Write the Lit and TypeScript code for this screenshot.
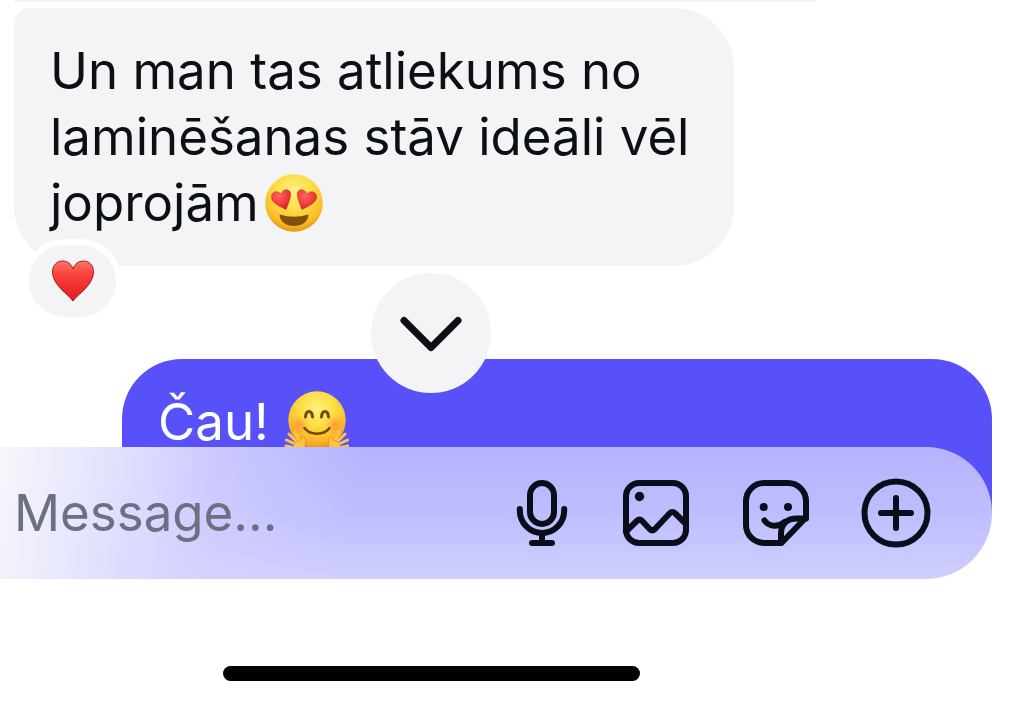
import { LitElement, css, html, svg } from "lit";
import { customElement, property } from "lit/decorators.js";

const micIcon = svg`<svg class="stroke" width="60" height="72" viewBox="0 0 60 72" aria-hidden="true">
  <rect x="18" y="6" width="24" height="41" rx="12"/>
  <path d="M7.800 32v1.500a22.200 22.600 0 0 0 44.400 0V32M30 56v10M20 66h20"/>
</svg>`;

const photoIcon = svg`<svg class="stroke" width="72" height="72" viewBox="0 0 72 72" aria-hidden="true">
  <rect x="6" y="6" width="60" height="60" rx="13"/>
  <circle class="dot" cx="19.500" cy="19.500" r="4.700"/>
  <path d="M6 54.500 16.800 44q2.700-2.500 5.400 0l7.400 8q2.700 2.500 5.400 0l14.500-15.500q2.900-3 5.800 0L66 47"/>
</svg>`;

const stickerIcon = svg`<svg class="stroke" width="72" height="72" viewBox="0 0 72 72" aria-hidden="true">
  <path d="M41.500 66H24A18 18 0 0 1 6 48V24A18 18 0 0 1 24 6h24a18 18 0 0 1 18 18v16.500z"/>
  <path d="M66 41.500H57C46 41.500 41 48 41 57v8"/>
  <path d="M24.500 43.500c5 6.500 13 7 20 1.500"/>
  <circle class="dot" cx="23.700" cy="30" r="4"/>
  <circle class="dot" cx="48" cy="30" r="4"/>
</svg>`;

const plusIcon = svg`<svg class="stroke" width="72" height="72" viewBox="0 0 72 72" aria-hidden="true">
  <circle cx="36" cy="36" r="31.500"/>
  <path d="M36 21v30M21 36h30"/>
</svg>`;

const chevronIcon = svg`<svg class="stroke" width="72" height="72" viewBox="0 0 72 72" aria-hidden="true">
  <path stroke-width="7" d="M9 23.500 36 50.500 63 23.500"/>
</svg>`;

const heartEyes = svg`<svg class="emoji" width="72" height="60" viewBox="-5 0 72 60" role="img" aria-label="😍">
  <defs>
    <radialGradient id="face" cx=".5" cy=".3" r=".72">
      <stop offset="0" stop-color="#fff387"/><stop offset=".45" stop-color="#fddc45"/>
      <stop offset=".8" stop-color="#f9bb24"/><stop offset="1" stop-color="#e2930f"/>
    </radialGradient>
    <radialGradient id="eye" cx=".4" cy=".3" r=".75">
      <stop offset="0" stop-color="#ff6560"/><stop offset=".6" stop-color="#f03a3c"/><stop offset="1" stop-color="#c81f27"/>
    </radialGradient>
  </defs>
  <circle cx="30" cy="30" r="28.800" fill="url(#face)"/>
  <g fill="url(#eye)" stroke="#b8372b" stroke-width=".6">
    <path d="M22 36.500C14 32.500 8 29.500 7.500 24.500 7 18.500 14 16.500 17 21.500 19 14.500 28 15.500 26.500 23 25.700 27.500 24 31.500 22 36.500z"/>
    <path d="M38 36.500C46 32.500 52 29.500 52.500 24.500 53 18.500 46 16.500 43 21.500 41 14.500 32 15.500 33.500 23 34.300 27.500 36 31.500 38 36.500z"/>
  </g>
  <path d="M15.500 41.500Q30 46 44.500 41.500C44 49 38 53 30 53S16 49 15.500 41.500z" fill="#7f510b"/>
</svg>`;

const hugging = svg`<svg class="emoji" width="66" height="64" viewBox="-2 -2 66 64" role="img" aria-label="🤗">
  <defs>
    <radialGradient id="hug" cx=".5" cy=".3" r=".72">
      <stop offset="0" stop-color="#fff27c"/><stop offset=".45" stop-color="#fddb3f"/>
      <stop offset=".8" stop-color="#fab528"/><stop offset="1" stop-color="#ec8d1b"/>
    </radialGradient>
    <radialGradient id="blush">
      <stop offset="0" stop-color="#fb7d35" stop-opacity=".6"/><stop offset="1" stop-color="#fb7d35" stop-opacity="0"/>
    </radialGradient>
  </defs>
  <circle cx="32" cy="30" r="28.700" fill="url(#hug)"/>
  <circle cx="14" cy="35" r="10" fill="url(#blush)"/>
  <circle cx="50" cy="35" r="10" fill="url(#blush)"/>
  <g fill="none" stroke="#754b0c" stroke-width="3" stroke-linecap="round">
    <path d="M20.500 27c.5-7.500 6.500-7.500 7 0M36.500 27c.5-7.500 6.500-7.500 7 0"/>
    <path d="M19.500 38c5 7.500 20 7.500 25 0" stroke-width="2.500"/>
  </g>
  <g fill="none" stroke="#fbc44c" stroke-linecap="round" stroke-width="3">
    <path d="M12 52 4 44M10 54 1.500 50M10 58 1 56M15 52 10 42"/>
    <path d="M52 52l8-8M54 54l8.500-4M54 58l9-2M49 52l5-10"/>
  </g>
  <g fill="#fbc440" stroke="#e38a1b" stroke-width=".7">
    <path d="M8 62C7 54 11 50 15 51 16 48 18 45.500 19.500 47 21 49 20 56 20 62z"/>
    <path d="M56 62C57 54 53 50 49 51 48 48 46 45.500 44.500 47 43 49 44 56 44 62z"/>
  </g>
</svg>`;

const heart = svg`<svg width="44" height="44" viewBox="0 0 44 44" aria-hidden="true">
  <defs>
    <linearGradient id="heart" x1="0" y1="0" x2="0" y2="1">
      <stop offset="0" stop-color="#ff7468"/><stop offset=".35" stop-color="#f9423a"/><stop offset="1" stop-color="#e01a1c"/>
    </linearGradient>
  </defs>
  <path d="M22 42C17 35 1.500 26 1.500 13 1.500 6 6 2 11.500 2 16.500 2 20.500 5 22 10 23.500 5 27.500 2 32.500 2 38 2 42.500 6 42.500 13 42.500 26 27 35 22 42z"
    fill="url(#heart)" stroke="#b3161b" stroke-width="1"/>
</svg>`;

const iconStyles = css`
  svg { display: block; }
  .stroke {
    fill: none;
    stroke: #0a0e1a;
    stroke-width: 6;
    stroke-linecap: round;
    stroke-linejoin: round;
  }
  .dot { fill: #0a0e1a; stroke: none; }
  button {
    flex: none;
    margin: 0;
    padding: 0;
    border: 0;
    background: none;
    cursor: pointer;
  }
`;

@customElement("chat-message")
class ChatMessage extends LitElement {
  @property({ type: Boolean, reflect: true }) sent = false;
  @property({ type: Boolean }) liked = false;

  static styles = [
    iconStyles,
    css`
      :host {
        display: block;
        position: relative;
        box-sizing: border-box;
        width: fit-content;
        max-width: 720px;
        padding: 30px 36px;
        border-radius: 16px 60px 60px 60px;
        background: #f3f4f6;
        color: #0c1014;
      }
      :host([sent]) {
        width: auto;
        max-width: none;
        padding-bottom: 58px;
        border-radius: 60px 60px 0 0;
        background: #5851fa;
        color: #fff;
      }
      p { margin: 0; }
      .reaction {
        position: absolute;
        left: 9px;
        bottom: -57px;
        display: grid;
        place-items: center;
        width: 99px;
        height: 84px;
        border: 6px solid #fff;
        border-radius: 42px;
        background: #f3f4f6;
      }
    `,
  ];

  render() {
    return html`<p><slot></slot></p>
      ${this.liked
        ? html`<button class="reaction" aria-label="❤️">${heart}</button>`
        : null}`;
  }
}

@customElement("chat-composer")
class ChatComposer extends LitElement {
  static styles = [
    iconStyles,
    css`
      :host { display: block; }
      form {
        display: flex;
        align-items: center;
        gap: 48px;
        height: 132px;
        padding: 0 60px 0 14px;
        border-radius: 0 66px 66px 0;
        background:
          linear-gradient(100deg, #f5f5fc 1%, #eaeafd 7%, #dddcff 14%, rgba(215, 213, 255, 0.6) 22%, rgba(208, 206, 255, 0) 36%),
          linear-gradient(#b6b3ff, #bfbdff 50%, #d0cfff);
      }
      input {
        flex: 1;
        min-width: 0;
        height: 66px;
        padding: 0;
        border: 0;
        outline: 0;
        background: none;
        color: #0c1014;
        font: inherit;
      }
      input::placeholder { color: #6c7080; opacity: 1; }
    `,
  ];

  render() {
    return html`<form>
      <input type="text" aria-label="Message" placeholder="Message..." />
      <button type="button" aria-label="Voice">${micIcon}</button>
      <button type="button" aria-label="Photo">${photoIcon}</button>
      <button type="button" aria-label="Sticker">${stickerIcon}</button>
      <button type="button" aria-label="More">${plusIcon}</button>
    </form>`;
  }
}

@customElement("app-root")
class AppRoot extends LitElement {
  static styles = [
    iconStyles,
    css`
      :host {
        display: block;
        min-height: 100vh;
        overflow: hidden;
        background: #fff;
        font: 400 51px/66px Inter, "Liberation Sans", sans-serif;
      }
      .thread {
        display: flex;
        flex-direction: column;
        padding: 0 24px 0 14px;
      }
      .previous {
        width: 82%;
        height: 2px;
        margin-bottom: 6px;
        border-radius: 0 0 60px 16px;
        background: #f3f4f6;
      }
      .emoji {
        display: inline-block;
        margin-block: -10px;
        vertical-align: -2px;
      }
      .jump {
        position: relative;
        z-index: 1;
        display: flex;
        justify-content: center;
        margin: 7px 0 -34px;
        padding-right: 144px;
      }
      .jump button {
        display: grid;
        place-items: center;
        width: 120px;
        height: 120px;
        border-radius: 50%;
        background: #f3f4f6;
      }
      .jump .stroke { stroke: #0c1014; }
      chat-message[sent] { margin-left: 108px; }
      chat-composer {
        position: relative;
        margin: -66px 24px 0 0;
      }
      .home {
        display: flex;
        justify-content: center;
        padding: 87px 153px 24px 0;
      }
      .home span {
        width: 417px;
        height: 15px;
        border-radius: 8px;
        background: #000;
      }
    `,
  ];

  render() {
    return html`
      <main class="thread">
        <div class="previous"></div>
        <chat-message liked>Un man tas atliekums no laminēšanas stāv ideāli vēl joprojām${heartEyes}</chat-message>
        <div class="jump"><button aria-label="Jump to latest">${chevronIcon}</button></div>
        <chat-message sent>Čau! ${hugging}</chat-message>
      </main>
      <chat-composer></chat-composer>
      <div class="home"><span></span></div>
    `;
  }
}
